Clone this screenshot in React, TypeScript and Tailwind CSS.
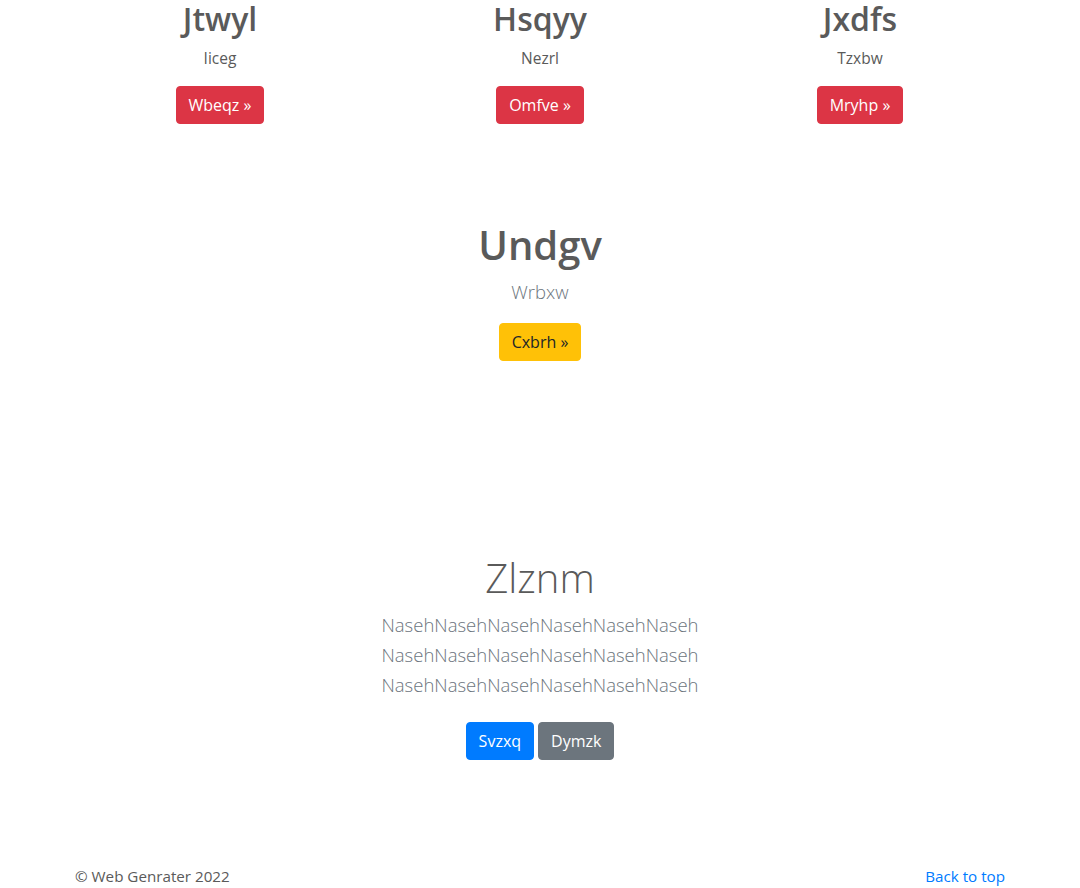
import React from "react";

const cols = [
  { title: "Jtwyl", text: "Iiceg", btn: "Wbeqz »" },
  { title: "Hsqyy", text: "Nezrl", btn: "Omfve »" },
  { title: "Jxdfs", text: "Tzxbw", btn: "Mryhp »" },
];

const font = { fontFamily: '"Open Sans", "Noto Sans", "Liberation Sans", sans-serif' };

export default function App() {
  return (
    <div className="min-h-[888px] bg-white text-[#5a5a5a] text-base leading-6" style={font}>
      <div className="mx-auto w-[960px] px-[15px]">
        {/* three columns */}
        <div className="grid grid-cols-3 -mx-[15px]">
          {cols.map((c) => (
            <div key={c.title} className="px-[15px] text-center">
              <h2 className="text-[32px] leading-[38.4px] font-semibold mb-2">{c.title}</h2>
              <p className="mb-4 text-[15.5px]">{c.text}</p>
              <a className="inline-block rounded bg-[#dc3545] px-3 py-[6px] leading-6 text-white border border-[#dc3545]">
                {c.btn}
              </a>
            </div>
          ))}
        </div>

        {/* single feature */}
        <div className="mt-[97px] text-center">
          <h2 className="text-[40px] leading-[48px] font-semibold mb-2">Undgv</h2>
          <p className="text-[18.5px] leading-[30px] font-light text-[#6c757d] mb-4">Wrbxw</p>
          <a className="inline-block rounded bg-[#ffc107] border border-[#ffc107] px-3 py-[6px] leading-6 text-[#212529]">
            Cxbrh »
          </a>
        </div>

        {/* jumbotron-ish */}
        <div className="mt-[193px] text-center">
          <h1 className="text-[40px] leading-[48px] font-light mb-2">Zlznm</h1>
          <p className="text-[18.5px] leading-[30px] font-light text-[#6c757d] mb-[22px]">
            NasehNasehNasehNasehNasehNaseh
            <br />
            NasehNasehNasehNasehNasehNaseh
            <br />
            NasehNasehNasehNasehNasehNaseh
          </p>
          <div className="flex justify-center gap-1">
            <a className="inline-block rounded bg-[#007bff] border border-[#007bff] px-3 py-[6px] leading-6 text-white">
              Svzxq
            </a>
            <a className="inline-block rounded bg-[#6c757d] border border-[#6c757d] px-3 py-[6px] leading-6 text-white">
              Dymzk
            </a>
          </div>
        </div>

        <footer className="mt-[104px] flex justify-between text-[15.2px]">
          <p>© Web Genrater 2022</p>
          <a className="text-[#007bff]">Back to top</a>
        </footer>
      </div>
    </div>
  );
}
